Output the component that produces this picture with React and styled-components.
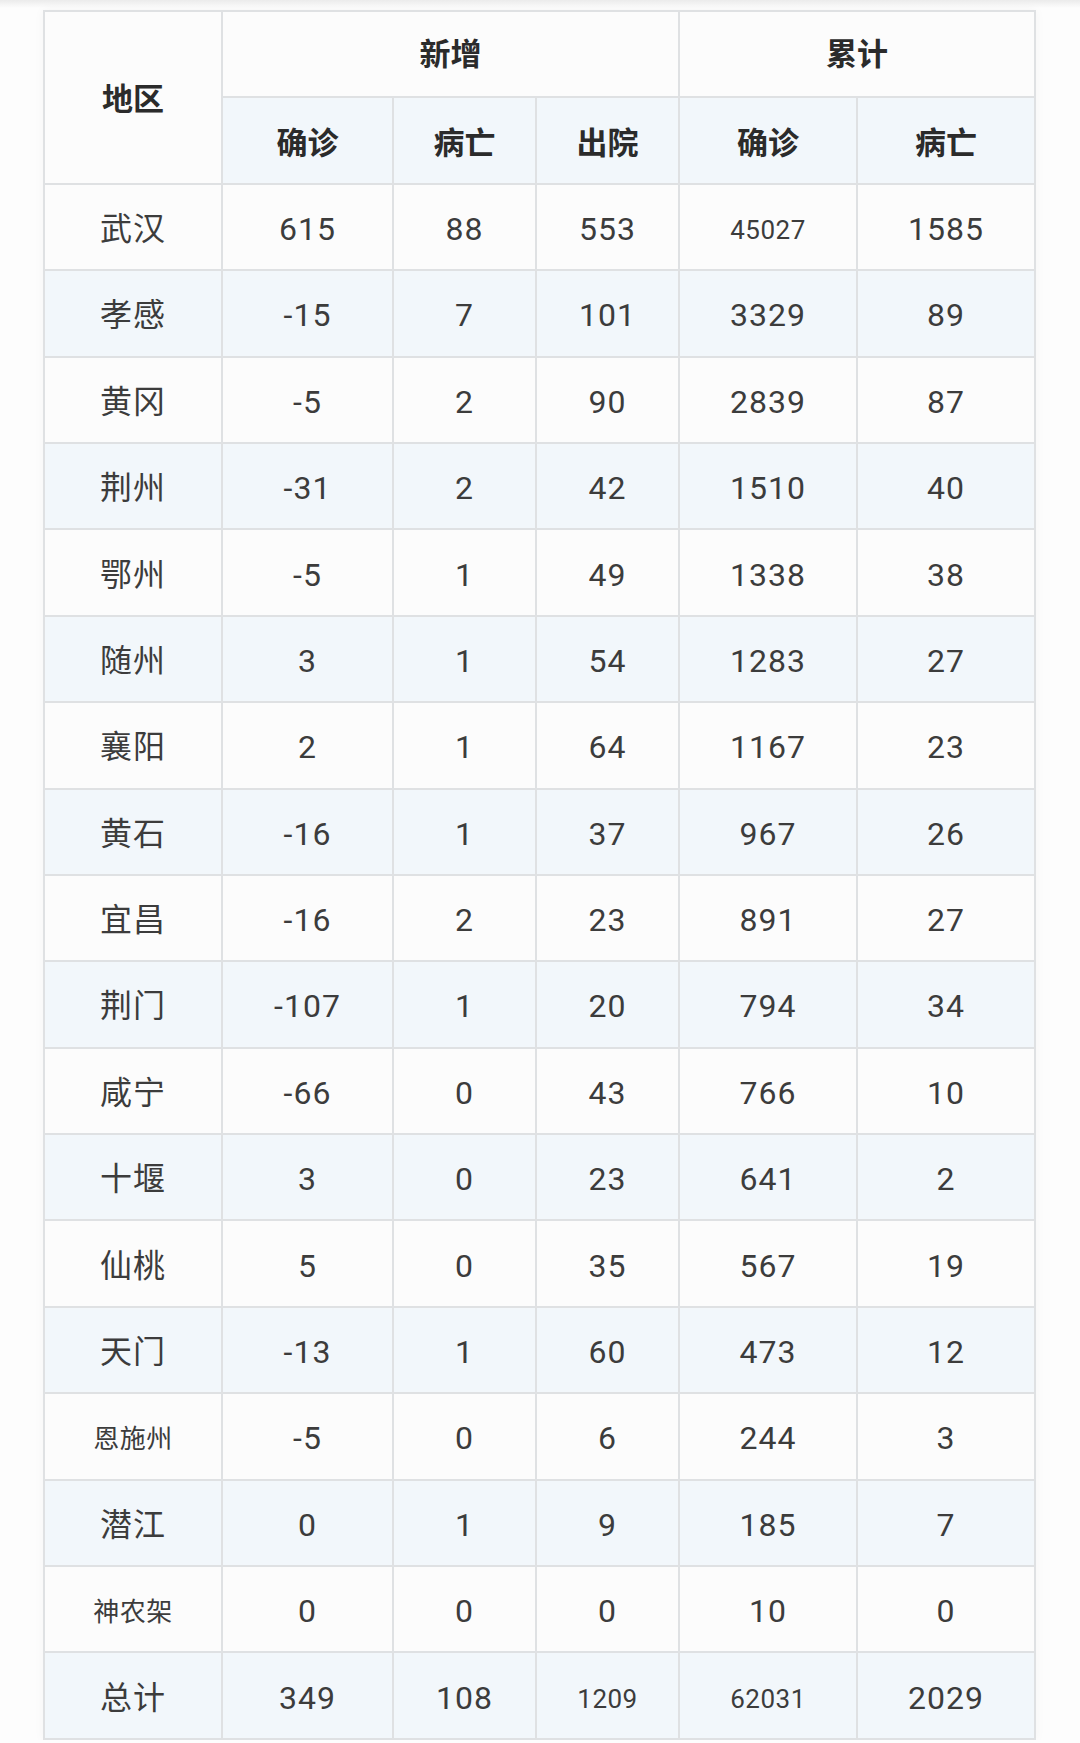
import React from "react";
import styled, { createGlobalStyle } from "styled-components";

const GlobalStyle = createGlobalStyle`
  html, body {
    margin: 0;
    padding: 0;
    background: #fdfdfd;
  }
  body {
    font-family: "Roboto", "Noto Sans CJK SC", sans-serif;
    color: #3a3a3a;
  }
`;

const regions = [
  ["武汉", "615", "88", "553", { v: "45027", small: true }, "1585"],
  ["孝感", "-15", "7", "101", "3329", "89"],
  ["黄冈", "-5", "2", "90", "2839", "87"],
  ["荆州", "-31", "2", "42", "1510", "40"],
  ["鄂州", "-5", "1", "49", "1338", "38"],
  ["随州", "3", "1", "54", "1283", "27"],
  ["襄阳", "2", "1", "64", "1167", "23"],
  ["黄石", "-16", "1", "37", "967", "26"],
  ["宜昌", "-16", "2", "23", "891", "27"],
  ["荆门", "-107", "1", "20", "794", "34"],
  ["咸宁", "-66", "0", "43", "766", "10"],
  ["十堰", "3", "0", "23", "641", "2"],
  ["仙桃", "5", "0", "35", "567", "19"],
  ["天门", "-13", "1", "60", "473", "12"],
  [{ v: "恩施州", small: true }, "-5", "0", "6", "244", "3"],
  ["潜江", "0", "1", "9", "185", "7"],
  [{ v: "神农架", small: true }, "0", "0", "0", "10", "0"],
  ["总计", "349", "108", { v: "1209", small: true }, { v: "62031", small: true }, "2029"],
];

function Value({ cell }) {
  if (typeof cell === "string") return cell;
  return <Small>{cell.v}</Small>;
}

function App() {
  return (
    <>
      <GlobalStyle />
      <TopShade />
      <Table>
        <colgroup>
          <col style={{ width: 178 }} />
          <col style={{ width: 171 }} />
          <col style={{ width: 143 }} />
          <col style={{ width: 143 }} />
          <col style={{ width: 178 }} />
          <col style={{ width: 178 }} />
        </colgroup>
        <thead>
          <Row>
            <Head rowSpan={2}>地区</Head>
            <Head colSpan={3} $raised>新增</Head>
            <Head colSpan={2} $raised>累计</Head>
          </Row>
          <Row $tinted>
            <Head>确诊</Head>
            <Head>病亡</Head>
            <Head>出院</Head>
            <Head>确诊</Head>
            <Head>病亡</Head>
          </Row>
        </thead>
        <tbody>
          {regions.map((row, i) => (
            <Row key={i} $tinted={i % 2 === 1}>
              {row.map((cell, j) => (
                <Cell key={j}>
                  <Value cell={cell} />
                </Cell>
              ))}
            </Row>
          ))}
        </tbody>
      </Table>
    </>
  );
}

const TopShade = styled.div`
  height: 8px;
  background: linear-gradient(180deg, #ebebeb 0%, #f6f6f6 60%, #fdfdfd 100%);
`;

const Table = styled.table`
  margin: 2px 0 0 43px;
  width: 993px;
  table-layout: fixed;
  border-collapse: collapse;
  box-shadow: 0 0 10px rgba(0, 0, 0, 0.04);
  background: #fcfcfc;
`;

const Row = styled.tr`
  height: 86.4px;
  background: ${(p) => (p.$tinted ? "#f2f7fb" : "#fcfcfc")};
`;

const Head = styled.th`
  border: 2px solid #dfe1e3;
  padding: ${(p) => (p.$raised ? "0 0 4px" : "0")};
  text-align: center;
  vertical-align: middle;
  font-family: "Noto Sans CJK SC", sans-serif;
  font-size: 31px;
  font-weight: 700;
  color: #2b2b2b;
  line-height: 40px;
`;

const Cell = styled.td`
  border: 2px solid #dfe1e3;
  padding: 4px 0 0;
  text-align: center;
  vertical-align: middle;
  font-family: "Roboto", "Noto Sans CJK SC", sans-serif;
  font-size: 32px;
  letter-spacing: 1px;
  line-height: 40px;
  color: #3c3c3c;
`;

const Small = styled.span`
  font-size: 26px;
  letter-spacing: 0.5px;
`;

export default App;
